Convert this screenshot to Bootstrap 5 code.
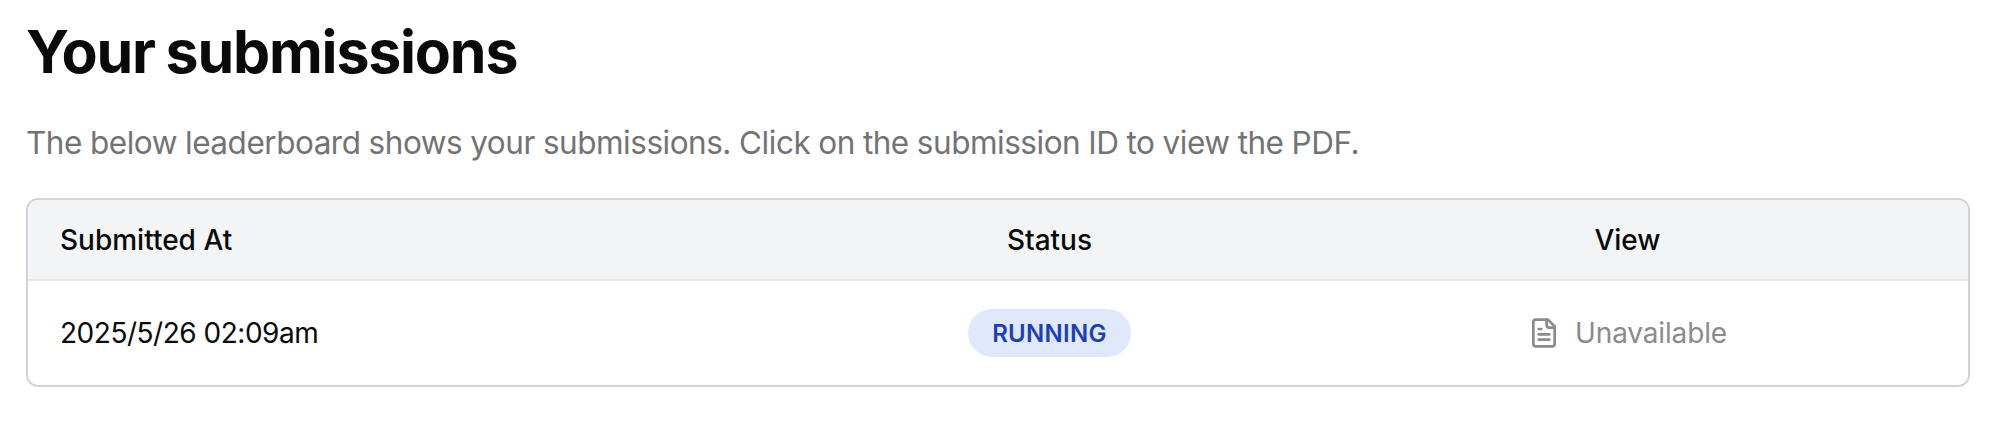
<!DOCTYPE html>
<html lang="en">
<head>
<meta charset="utf-8">
<meta name="viewport" content="width=device-width, initial-scale=1">
<title>Your submissions</title>
<link href="https://cdn.jsdelivr.net/npm/bootstrap@5.3.0/dist/css/bootstrap.min.css" rel="stylesheet">
<style>
body{font-family:Inter,sans-serif;color:#0a0a0a;background:#fff}
.page{padding:20px 38px 0 26px}
h1{font-size:59px;line-height:64px;font-weight:700;letter-spacing:-1.2px;word-spacing:-2px;white-space:nowrap}
.intro{font-size:31.5px;line-height:48px;color:#737373;letter-spacing:-.48px;word-spacing:-.3px;margin-top:35px;white-space:nowrap}
.board{border:2px solid #d1d5db;border-radius:12px;margin-top:31px}
.board-head{height:81px;background:#f3f4f6;border-bottom:2px solid #e5e7eb;font-weight:500}
.board-line{height:104px}
.board-grid{display:grid;grid-template-columns:784px 475px 1fr;font-size:28px;line-height:40px}
.first-cell{padding-left:32px}
.date{letter-spacing:-.48px}
.status{font-size:24px;line-height:32px;font-weight:600;letter-spacing:.3px;background:#dfe9fb;color:#1e3fb4;padding:9px 0 7px;width:163px}
.view-state{color:#8b8b8b;letter-spacing:-.15px;gap:15px}
</style>
</head>
<body>
<main class="page">
<h1 class="mb-0"><span>Your submissions</span></h1>
<p class="intro mb-0"><span>The below leaderboard shows your submissions. Click on the submission ID to view the PDF.</span></p>
<section class="board overflow-hidden">
<div class="board-grid board-head align-items-center">
<div class="first-cell">Submitted At</div>
<div class="text-center">Status</div>
<div class="text-center">View</div>
</div>
<div class="board-grid board-line align-items-center">
<div class="first-cell date">2025/5/26 02:09am</div>
<div class="d-flex justify-content-center"><span class="badge rounded-pill status">RUNNING</span></div>
<div class="d-flex justify-content-center align-items-center view-state">
<svg width="32" height="32" viewBox="0 0 24 24" fill="none" stroke="currentColor" stroke-width="2" stroke-linecap="round" stroke-linejoin="round" aria-hidden="true"><path d="M15 2H6a2 2 0 0 0-2 2v16a2 2 0 0 0 2 2h12a2 2 0 0 0 2-2V7Z"/><path d="M14 2v4a2 2 0 0 0 2 2h4"/><path d="M10 9H8"/><path d="M16 13H8"/><path d="M16 17H8"/></svg>
<span>Unavailable</span>
</div>
</div>
</section>
</main>
<script src="https://cdn.jsdelivr.net/npm/bootstrap@5.3.0/dist/js/bootstrap.bundle.min.js"></script>
</body>
</html>
